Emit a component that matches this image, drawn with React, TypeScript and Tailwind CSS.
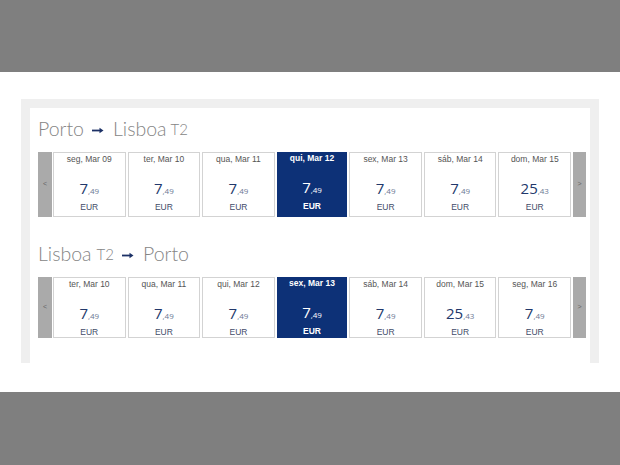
type Day = { label: string; whole: string; cents: string; selected?: boolean };

const outbound: Day[] = [
  { label: 'seg, Mar 09', whole: '7', cents: ',49' },
  { label: 'ter, Mar 10', whole: '7', cents: ',49' },
  { label: 'qua, Mar 11', whole: '7', cents: ',49' },
  { label: 'qui, Mar 12', whole: '7', cents: ',49', selected: true },
  { label: 'sex, Mar 13', whole: '7', cents: ',49' },
  { label: 'sáb, Mar 14', whole: '7', cents: ',49' },
  { label: 'dom, Mar 15', whole: '25', cents: ',43' },
];

const inbound: Day[] = [
  { label: 'ter, Mar 10', whole: '7', cents: ',49' },
  { label: 'qua, Mar 11', whole: '7', cents: ',49' },
  { label: 'qui, Mar 12', whole: '7', cents: ',49' },
  { label: 'sex, Mar 13', whole: '7', cents: ',49', selected: true },
  { label: 'sáb, Mar 14', whole: '7', cents: ',49' },
  { label: 'dom, Mar 15', whole: '25', cents: ',43' },
  { label: 'seg, Mar 16', whole: '7', cents: ',49' },
];

function Arrow() {
  return (
    <svg width="12" height="7" viewBox="0 0 12 7" className="ml-[8px] mr-[9px] mt-[3px] shrink-0">
      <path d="M0 3.5H9" stroke="#1c3166" strokeWidth="1.8" />
      <path d="M7.5 0.8L11.5 3.5L7.5 6.2Z" fill="#1c3166" />
    </svg>
  );
}

function Title({ from, fromSub, to, toSub }: { from: string; fromSub?: string; to: string; toSub?: string }) {
  return (
    <div className="flex h-[28px] items-center font-['Lato',sans-serif] text-[19.5px] font-light leading-[28px] text-[#858585]">
      <span>{from}</span>
      {fromSub && <span className="ml-[5px] text-[15px]">{fromSub}</span>}
      <Arrow />
      <span>{to}</span>
      {toSub && <span className="ml-[4px] text-[15px]">{toSub}</span>}
    </div>
  );
}

function Card({ day }: { day: Day }) {
  const sel = day.selected;
  return (
    <div
      className={
        'flex flex-1 flex-col items-center pt-[1px] ' +
        (sel ? 'bg-[#0d3177] text-white' : 'border border-[#d3d3d3] bg-white')
      }
    >
      <div
        className={
          "font-['Liberation_Sans',sans-serif] text-[8.5px] leading-[11px] " +
          (sel ? 'font-bold text-white' : 'text-[#555]')
        }
      >
        {day.label}
      </div>
      <div
        className={
          "mt-[15px] font-['Open_Sans',sans-serif] leading-[16px] " + (sel ? 'text-white' : 'text-[#22386b]')
        }
      >
        <span className="text-[15px]">{day.whole}</span>
        <span className={'text-[8px] ' + (sel ? 'text-white' : 'text-[#6b7894]')}>{day.cents}</span>
      </div>
      <div
        className={
          "mt-[3px] font-['Liberation_Sans',sans-serif] text-[8.5px] leading-[10px] " +
          (sel ? 'font-bold text-white' : 'text-[#3f4c68]')
        }
      >
        EUR
      </div>
    </div>
  );
}

function Row({ days, height }: { days: Day[]; height: string }) {
  return (
    <div className={'flex ' + height}>
      <div className="flex w-[14px] shrink-0 items-center justify-center bg-[#aaaaaa] font-['Liberation_Sans',sans-serif] text-[7px] text-[#666]">
        &lt;
      </div>
      <div className="ml-[1px] flex flex-1 gap-[2px]">
        {days.map((d) => (
          <Card key={d.label} day={d} />
        ))}
      </div>
      <div className="ml-[2px] flex w-[13px] shrink-0 items-center justify-center bg-[#aaaaaa] font-['Liberation_Sans',sans-serif] text-[7px] text-[#666]">
        &gt;
      </div>
    </div>
  );
}

export default function App() {
  return (
    <div className="flex h-[465px] w-[620px] flex-col bg-[#7f7f7f]">
      <div className="h-[72px] shrink-0" />
      <div className="h-[320px] shrink-0 bg-white px-[21px] pt-[27px]">
        <div className="h-[264px] overflow-hidden bg-[#efefef] px-[9px] pt-[9px]">
          <div className="h-full bg-white pl-[8px] pr-[4px] pt-[7px]">
            <Title from="Porto" to="Lisboa" toSub="T2" />
            <div className="mt-[9px]">
              <Row days={outbound} height="h-[65px]" />
            </div>
            <div className="mt-[23px]">
              <Title from="Lisboa" fromSub="T2" to="Porto" />
            </div>
            <div className="mt-[9px]">
              <Row days={inbound} height="h-[61px]" />
            </div>
          </div>
        </div>
      </div>
    </div>
  );
}
